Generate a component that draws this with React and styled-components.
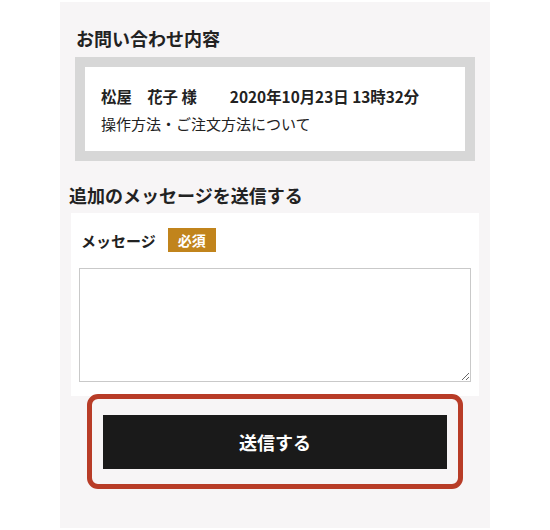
import React from 'react'
import styled, {createGlobalStyle} from 'styled-components'

const GlobalStyle = createGlobalStyle`
    body {
        margin: 0;
        background: #fff;
        font-family: "Noto Sans CJK JP", "Noto Sans", sans-serif;
        color: #222;
    }
`
const Panel = styled.div`
    width: 430px;
    height: 526px;
    margin: 2px 0 0 60px;
    padding-top: 23px;
    box-sizing: border-box;
    background-color: #f7f5f6;
`
const Heading = styled.h2`
    margin: 0 0 ${p => p.gap}px ${p => p.indent}px;
    font-size: 18px;
    font-weight: 700;
    line-height: 26px;
`
const InquiryBox = styled.div`
    margin: 0 15px 21px;
    padding: 15px 16px 13px;
    border: 10px solid #d7d7d7;
    background-color: #fff;
`
const InquiryHead = styled.div`
    display: flex;
    gap: 33px;
    font-size: 15.4px;
    font-weight: 700;
    line-height: 28px;
`
const InquiryBody = styled.div`
    font-size: 15px;
    line-height: 28px;
`
const FormBox = styled.div`
    margin: 0 11px;
    padding: 15px 8px 14px;
    background-color: #fff;
`
const LabelRow = styled.div`
    display: flex;
    align-items: center;
    gap: 12px;
    margin: 0 0 16px 2px;
`
const Label = styled.span`
    font-size: 15px;
    font-weight: 700;
`
const Badge = styled.span`
    display: inline-flex;
    align-items: center;
    height: 24px;
    padding: 0 10px;
    color: #fff;
    font-size: 14px;
    font-weight: 700;
    background-color: #c1841c;
`
const MessageInput = styled.textarea`
    display: block;
    width: 392px;
    height: 114px;
    box-sizing: border-box;
    border: 1px solid #c9c9c9;
    border-radius: 0;
    resize: vertical;
`
const Highlight = styled.div`
    width: 376px;
    margin: -2px 0 0 27px;
    padding: 16px 11px 15px;
    box-sizing: border-box;
    border: 5px solid #b83c27;
    border-radius: 11px;
`
const SubmitButton = styled.button`
    display: block;
    width: 100%;
    height: 54px;
    border: none;
    color: #fff;
    font-family: inherit;
    font-size: 18px;
    font-weight: 700;
    background-color: #1a1a1a;
`

function App(){
    return (
        <>
            <GlobalStyle />
            <Panel>
                <Heading indent={16} gap={6}>お問い合わせ内容</Heading>
                <InquiryBox>
                    <InquiryHead>
                        <span>松屋　花子 様</span>
                        <span>2020年10月23日 13時32分</span>
                    </InquiryHead>
                    <InquiryBody>操作方法・ご注文方法について</InquiryBody>
                </InquiryBox>
                <Heading indent={9} gap={5}>追加のメッセージを送信する</Heading>
                <FormBox>
                    <LabelRow>
                        <Label>メッセージ</Label>
                        <Badge>必須</Badge>
                    </LabelRow>
                    <MessageInput />
                </FormBox>
                <Highlight>
                    <SubmitButton>送信する</SubmitButton>
                </Highlight>
            </Panel>
        </>
    )
}

export default App
